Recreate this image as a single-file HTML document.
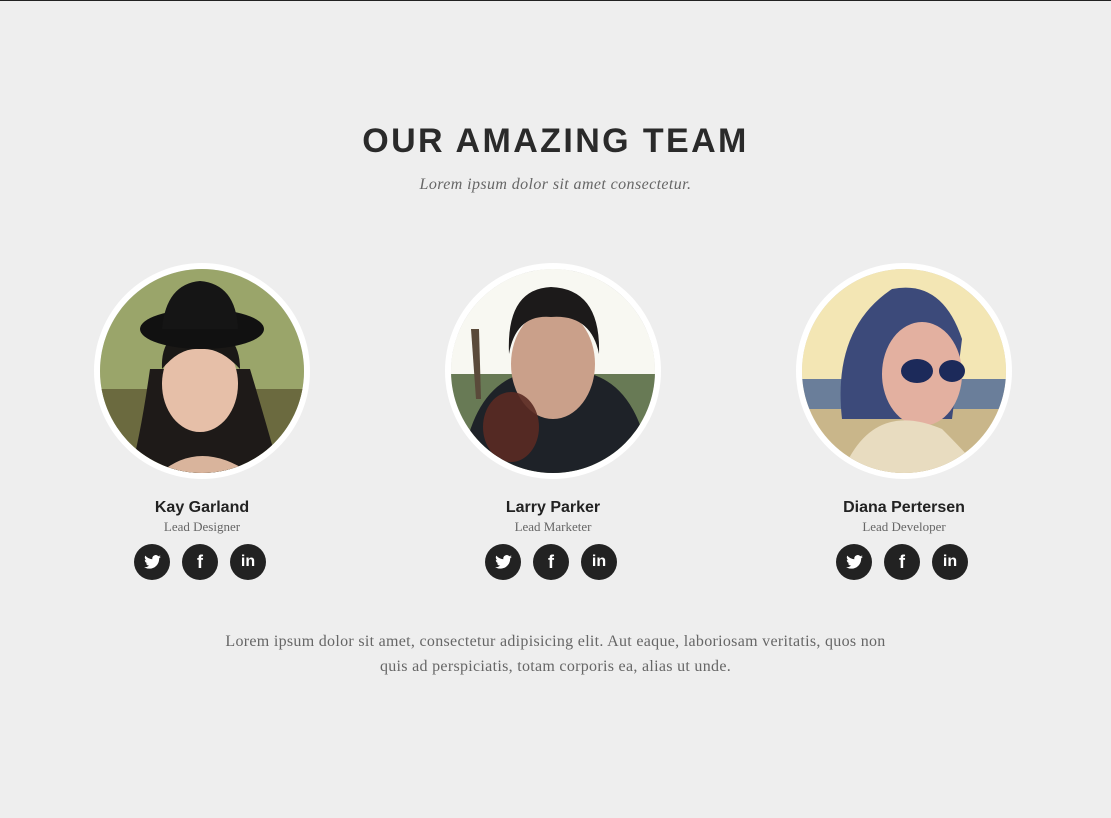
<!DOCTYPE html>
<html><head><meta charset="utf-8"><style>
*{margin:0;padding:0;box-sizing:border-box}
html,body{width:1111px;height:818px;overflow:hidden;background:#eeeeee}
body{border-top:1px solid #222;position:relative;font-family:"Liberation Serif",serif}
h2{position:absolute;top:121px;left:0;width:1111px;text-align:center;font:700 34px "Liberation Sans",sans-serif;color:#2a2a2a;letter-spacing:2.4px}
.sub{position:absolute;top:175px;left:0;width:1111px;text-align:center;font-style:italic;font-size:16px;letter-spacing:0.4px;color:#666}
.m{position:absolute;top:262px;width:216px;margin-left:-108px;text-align:center}
.ph{width:216px;height:216px;border-radius:50%;border:6px solid #fff;overflow:hidden;background:#ccc}
.ph svg{display:block}
.n{margin-top:20px;font:700 16px "Liberation Sans",sans-serif;color:#222}
.r{font-size:13px;color:#666;margin-top:2px}
.s{margin-top:9px;margin-left:-4px;display:flex;justify-content:center;gap:12px}
.s span{width:36px;height:36px;border-radius:50%;background:#222;display:flex;align-items:center;justify-content:center;color:#fff;font:700 18px "Liberation Sans",sans-serif}
.p{position:absolute;top:628px;left:155px;width:801px;text-align:center;font-size:16px;letter-spacing:0.3px;line-height:25px;color:#666}
</style></head><body>
<h2>OUR AMAZING TEAM</h2>
<div class="sub">Lorem ipsum dolor sit amet consectetur.</div>

<div class="m" style="left:202px">
<div class="ph"><svg width="204" height="204" viewBox="0 0 204 204">
<rect width="204" height="204" fill="#9aa56a"/>
<rect y="120" width="204" height="84" fill="#6b6a3f"/>
<path d="M50 100 Q40 170 30 204 L180 204 Q165 150 150 100Z" fill="#1e1a18"/>
<ellipse cx="100" cy="115" rx="38" ry="48" fill="#e6bfa8"/>
<path d="M62 100 Q60 60 100 58 Q140 60 140 100 Q120 78 100 80 Q80 78 62 100Z" fill="#1a1816"/>
<ellipse cx="102" cy="60" rx="62" ry="20" fill="#111"/>
<path d="M62 60 Q66 15 100 12 Q136 15 138 60Z" fill="#151515"/>
<path d="M60 204 Q100 170 150 204Z" fill="#d9b49c"/>
</svg></div>
<div class="n">Kay Garland</div><div class="r">Lead Designer</div>
<div class="s"><span><svg width="17" height="14" viewBox="0 0 24 20"><path fill="#fff" d="M24 2.4a10 10 0 0 1-2.8.8A5 5 0 0 0 23.3.5a10 10 0 0 1-3.1 1.2A4.9 4.9 0 0 0 11.8 6 14 14 0 0 1 1.7.9a4.9 4.9 0 0 0 1.5 6.6A4.9 4.9 0 0 1 1 6.9a4.9 4.9 0 0 0 3.9 4.8 5 5 0 0 1-2.2.1 4.9 4.9 0 0 0 4.6 3.4A9.9 9.9 0 0 1 0 17.3 14 14 0 0 0 7.5 19.5c9 0 14-7.5 14-14v-.6A10 10 0 0 0 24 2.4z"/></svg></span><span>f</span><span style="font-size:16px">in</span></div>
</div>

<div class="m" style="left:553px">
<div class="ph"><svg width="204" height="204" viewBox="0 0 204 204">
<rect width="204" height="204" fill="#f8f8f2"/>
<rect y="105" width="204" height="99" fill="#687a55"/>
<path d="M20 60 L25 130 L30 130 L28 60Z" fill="#5a4a3a"/>
<path d="M10 204 Q20 120 70 105 L140 105 Q190 120 200 204Z" fill="#1e2228"/>
<ellipse cx="102" cy="95" rx="42" ry="55" fill="#caa08a"/>
<path d="M58 85 Q55 20 100 18 Q150 20 148 85 Q140 45 100 48 Q65 45 58 85Z" fill="#1c1a1a"/>
<ellipse cx="60" cy="158" rx="28" ry="35" fill="#5a2a22" opacity="0.9"/>
</svg></div>
<div class="n">Larry Parker</div><div class="r">Lead Marketer</div>
<div class="s"><span><svg width="17" height="14" viewBox="0 0 24 20"><path fill="#fff" d="M24 2.4a10 10 0 0 1-2.8.8A5 5 0 0 0 23.3.5a10 10 0 0 1-3.1 1.2A4.9 4.9 0 0 0 11.8 6 14 14 0 0 1 1.7.9a4.9 4.9 0 0 0 1.5 6.6A4.9 4.9 0 0 1 1 6.9a4.9 4.9 0 0 0 3.9 4.8 5 5 0 0 1-2.2.1 4.9 4.9 0 0 0 4.6 3.4A9.9 9.9 0 0 1 0 17.3 14 14 0 0 0 7.5 19.5c9 0 14-7.5 14-14v-.6A10 10 0 0 0 24 2.4z"/></svg></span><span>f</span><span style="font-size:16px">in</span></div>
</div>

<div class="m" style="left:904px">
<div class="ph"><svg width="204" height="204" viewBox="0 0 204 204">
<rect width="204" height="204" fill="#f3e6b4"/>
<rect y="110" width="204" height="30" fill="#6a7e9a"/>
<rect y="140" width="204" height="64" fill="#c9b68a"/>
<path d="M40 150 Q30 60 90 20 Q140 10 160 70 L150 150Z" fill="#3c4a7a"/>
<ellipse cx="120" cy="105" rx="40" ry="52" fill="#e3b0a0"/>
<ellipse cx="115" cy="102" rx="16" ry="12" fill="#1c2a5a"/>
<ellipse cx="150" cy="102" rx="13" ry="11" fill="#1c2a5a"/>
<path d="M40 204 Q70 130 140 160 Q170 190 180 204Z" fill="#e8dcc0"/>
</svg></div>
<div class="n">Diana Pertersen</div><div class="r">Lead Developer</div>
<div class="s"><span><svg width="17" height="14" viewBox="0 0 24 20"><path fill="#fff" d="M24 2.4a10 10 0 0 1-2.8.8A5 5 0 0 0 23.3.5a10 10 0 0 1-3.1 1.2A4.9 4.9 0 0 0 11.8 6 14 14 0 0 1 1.7.9a4.9 4.9 0 0 0 1.5 6.6A4.9 4.9 0 0 1 1 6.9a4.9 4.9 0 0 0 3.9 4.8 5 5 0 0 1-2.2.1 4.9 4.9 0 0 0 4.6 3.4A9.9 9.9 0 0 1 0 17.3 14 14 0 0 0 7.5 19.5c9 0 14-7.5 14-14v-.6A10 10 0 0 0 24 2.4z"/></svg></span><span>f</span><span style="font-size:16px">in</span></div>
</div>

<div class="p">Lorem ipsum dolor sit amet, consectetur adipisicing elit. Aut eaque, laboriosam veritatis, quos non<br>quis ad perspiciatis, totam corporis ea, alias ut unde.</div>
</body></html>
